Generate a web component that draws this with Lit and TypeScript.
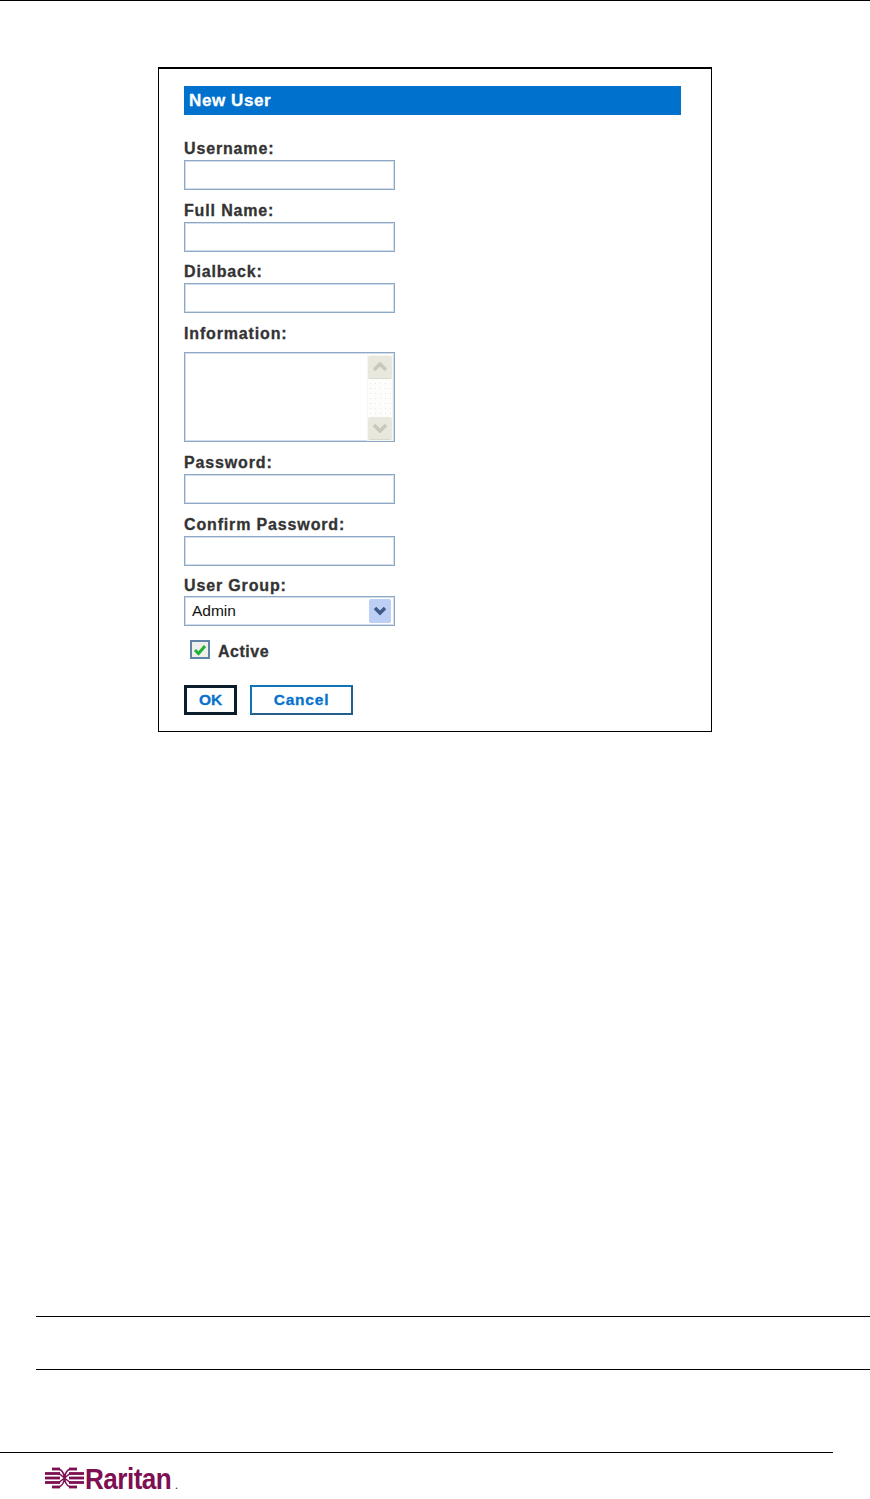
import { LitElement, html, css, svg } from "lit";
import { customElement } from "lit/decorators.js";

@customElement("app-root")
export class AppRoot extends LitElement {
	static override styles = css`
		:host {
			background: #fff;
			display: block;
			height: 1499px;
			overflow: hidden;
			position: relative;
			width: 870px;
		}

		.page {
			border-top: 1px solid #000;
			display: flex;
			flex-direction: column;
			height: 1498px;
		}

		.dialog {
			border: 1px solid #000;
			border-top-width: 2px;
			box-sizing: border-box;
			font-family: "Liberation Sans", Arial, sans-serif;
			height: 665px;
			margin: 66px 0 0 158px;
			padding: 17px 30px 0 25px;
			width: 554px;
		}

		.title {
			background: #0071cd;
			box-sizing: border-box;
			color: #fff;
			font-size: 17px;
			font-weight: 700;
			height: 29px;
			letter-spacing: 0.6px;
			line-height: 29px;
			padding-left: 5px;
			-webkit-text-stroke: 0.3px #fff;
		}

		.field {
			display: flex;
			flex-direction: column;
			margin-top: 11.5px;
		}

		.title + .field {
			margin-top: 25px;
		}

		label, .active {
			color: #333;
			font-size: 16px;
			font-weight: 700;
			height: 20px;
			letter-spacing: 0.85px;
			line-height: 18px;
			-webkit-text-stroke: 0.3px #333;
		}

		.input {
			background: #fff;
			border: 1px solid #8ea8c8;
			box-shadow: inset 0 0 0 1px #d3deeb;
			box-sizing: border-box;
			height: 30px;
			width: 211px;
		}

		.area {
			display: flex;
			height: 90px;
			justify-content: flex-end;
			margin: 7px 0 1px;
			padding: 3px 2px 1px;
		}

		.bar {
			background-color: #fdfdfb;
			background-image: radial-gradient(#e9e9e0 0.6px, transparent 0.8px);
			background-size: 5px 5px;
			box-shadow: 0 0 0 1px #f6f6ef;
			display: flex;
			flex-direction: column;
			justify-content: space-between;
			width: 24px;
		}

		.bar-btn {
			align-items: center;
			background: #e8e8df;
			border-bottom: 1px solid #d9d9cd;
			border-radius: 2px;
			display: flex;
			height: 22px;
			justify-content: center;
		}

		.select {
			align-items: center;
			color: #111;
			display: flex;
			font-size: 15.5px;
			justify-content: space-between;
			margin-top: -1px;
			padding: 0 3px 0 7px;
		}

		.select-btn {
			align-items: center;
			background: #bdcff5;
			border-radius: 2px;
			display: flex;
			height: 24px;
			justify-content: center;
			width: 22px;
		}

		.check-row {
			align-items: flex-start;
			display: flex;
			gap: 8px;
			margin: 14px 0 0 6px;
		}

		.check {
			align-items: center;
			background: #f0f0ea;
			border: 2px solid #5e85a8;
			box-sizing: border-box;
			display: flex;
			height: 19px;
			justify-content: center;
			width: 20px;
		}

		.active {
			height: auto;
			letter-spacing: 0.5px;
			line-height: 16px;
			padding-top: 4px;
		}

		.buttons {
			display: flex;
			gap: 13px;
			margin-top: 25px;
		}

		.btn {
			background: #fff;
			border: 2px solid #0f74b8;
			border-bottom-color: #245f88;
			border-right-color: #245f88;
			box-sizing: border-box;
			color: #0672cc;
			font-size: 15.5px;
			font-weight: 700;
			height: 30px;
			letter-spacing: 0.5px;
			line-height: 26px;
			text-align: center;
			-webkit-text-stroke: 0.3px #0672cc;
		}

		.ok {
			border: 3px solid #0b1c2b;
			letter-spacing: 0;
			line-height: 24px;
			width: 53px;
		}

		.cancel {
			letter-spacing: 0.8px;
			width: 103px;
		}

		.rule {
			background: #000;
			flex: none;
			height: 1px;
		}

		.note-top {
			margin: 584px 0 0 36px;
		}

		.note-bottom {
			margin: 52px 0 0 36px;
		}

		.foot {
			margin-top: 82px;
			width: 833px;
		}

		.logo {
			align-items: center;
			color: #7d0f52;
			display: flex;
			font-family: "Liberation Sans", Arial, sans-serif;
			font-size: 30px;
			font-weight: 700;
			gap: 1px;
			height: 30px;
			line-height: 30px;
			margin: 11px 0 0 45px;
		}

		/* the wordmark is narrower than any installed bold */
		.word {
			display: inline-block;
			letter-spacing: -0.6px;
			margin-right: -10px;
			transform: scaleX(0.87);
			transform-origin: left center;
		}

		.logo small {
			font-size: 9px;
			margin: 14px 0 0 0;
		}
	`;

	private field(name: string) {
		return html`
			<div class="field">
				<label>${name}</label>
				<div class="input"></div>
			</div>
		`;
	}

	private arrow(points: string, color: string, width: number) {
		return svg`<polyline points="${points}" fill="none" stroke="${color}" stroke-width="${width}" />`;
	}

	private logoMark() {
		// bus lines on both sides of the crossed middle
		const ys = [2, 6.5, 11, 15.5, 20];
		return html`
			<svg width="39" height="24" viewBox="0 0 39 24">
				${ys.map((y, i) => {
					const inset = i === 0 || i === 4 ? 7 : 0;
					return svg`
						<line x1="${inset}" y1="${y}" x2="15" y2="${y}" stroke="#7d0f52" stroke-width="2.8" />
						<line x1="24" y1="${y}" x2="${39 - inset}" y2="${y}" stroke="#7d0f52" stroke-width="2.8" />
					`;
				})}
				<path d="M14 2C19 4 19 8 19.5 11C20 14 20 18 25 20M25 2C20 4 20 8 19.5 11C19 14 19 18 14 20M14 6.5L25 15.5M25 6.5L14 15.5" fill="none" stroke="#7d0f52" stroke-width="1.6" />
			</svg>
		`;
	}

	override render() {
		return html`
			<div class="page">
				<div class="dialog">
					<div class="title">New User</div>
					${this.field("Username:")}
					${this.field("Full Name:")}
					${this.field("Dialback:")}
					<div class="field">
						<label>Information:</label>
						<div class="input area">
							<div class="bar">
								<div class="bar-btn">
									<svg width="16" height="10" viewBox="0 0 16 10">${this.arrow("2,8 8,2 14,8", "#c9c9bb", 3.5)}</svg>
								</div>
								<div class="bar-btn">
									<svg width="16" height="10" viewBox="0 0 16 10">${this.arrow("2,2 8,8 14,2", "#c9c9bb", 3.5)}</svg>
								</div>
							</div>
						</div>
					</div>
					${this.field("Password:")}
					${this.field("Confirm Password:")}
					<div class="field">
						<label>User Group:</label>
						<div class="input select">
							<span>Admin</span>
							<div class="select-btn">
								<svg width="14" height="10" viewBox="0 0 14 10">${this.arrow("2,2 7,7 12,2", "#3c5a85", 3.4)}</svg>
							</div>
						</div>
					</div>
					<div class="check-row">
						<div class="check">
							<svg width="14" height="12" viewBox="0 0 14 12">${this.arrow("2,6 5.5,9.5 12,2", "#1fb23a", 3)}</svg>
						</div>
						<span class="active">Active</span>
					</div>
					<div class="buttons">
						<div class="btn ok">OK</div>
						<div class="btn cancel">Cancel</div>
					</div>
				</div>
				<div class="rule note-top"></div>
				<div class="rule note-bottom"></div>
				<div class="rule foot"></div>
				<div class="logo">
					${this.logoMark()}
					<span class="word">Raritan</span><small>.</small>
				</div>
			</div>
		`;
	}
}
